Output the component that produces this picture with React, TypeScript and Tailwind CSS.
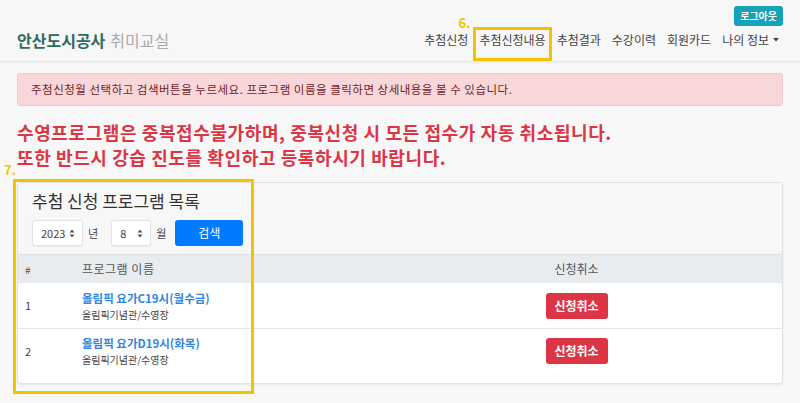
import React from "react";

const NAV = ["추첨신청", "추첨신청내용", "추첨결과", "수강이력", "회원카드"];

const ROWS = [
  { no: 1, title: "올림픽 요가C19시(월수금)", place: "올림픽기념관/수영장" },
  { no: 2, title: "올림픽 요가D19시(화목)", place: "올림픽기념관/수영장" },
];

function Updown() {
  return (
    <svg width="6" height="9" viewBox="0 0 6 9" className="text-[#555]">
      <path d="M3 0.5 L5.5 3.5 H0.5 Z M3 8.5 L5.5 5.5 H0.5 Z" fill="currentColor" />
    </svg>
  );
}

function FakeSelect({ value, width }: { value: string; width: string }) {
  return (
    <div
      className={`${width} h-[26px] bg-white rounded-[3px] border border-[#e3e3e3] shadow-[0_1px_1px_rgba(0,0,0,0.05)] flex items-center justify-between pl-[8px] pr-[7px] text-[11px] text-[#444]`}
    >
      <span>{value}</span>
      <Updown />
    </div>
  );
}

export default function App() {
  return (
    <div className="min-h-screen bg-[#f8f8f8] font-['Noto_Sans_CJK_KR','Noto_Sans',sans-serif] text-[#333]">
      {/* Navbar */}
      <header className="h-[62px] bg-[#f7f7f7] border-b border-[#e6e6e6] shadow-[0_1px_2px_rgba(0,0,0,0.04)] px-[17px] flex flex-col">
        <div className="flex justify-end pt-[6px]">
          <button className="h-[20px] px-[6px] bg-[#17a2b8] rounded-[3px] text-white text-[10px] font-bold leading-none">
            로그아웃
          </button>
        </div>
        <div className="h-[28px] flex items-center justify-between">
          <div className="flex items-baseline gap-[5px] text-[16px] leading-none">
            <span className="font-bold text-[#2f6a5f]">안산도시공사</span>
            <span className="text-[#aaa]">취미교실</span>
          </div>
          <nav className="flex items-center text-[12px] text-[#444] gap-[11px] pr-[4px]">
            {NAV.map((n) => (
              <span key={n} className="relative leading-[16px]">
                {n}
                {n === "추첨신청내용" && (
                  <>
                    <span className="absolute left-[-6px] right-[-6px] top-[-5px] bottom-[-13px] border-[3px] border-[#f6c200]" />
                    <span className="absolute left-[-21px] top-[-16px] text-[13px] font-bold text-[#f6c200] leading-none">
                      6.
                    </span>
                  </>
                )}
              </span>
            ))}
            <span className="flex items-center gap-[4px] leading-[16px]">
              나의 정보
              <svg width="6" height="4" viewBox="0 0 6 4">
                <path d="M0 0 H6 L3 3.5 Z" fill="#444" />
              </svg>
            </span>
          </nav>
        </div>
      </header>

      <main className="px-[17px]">
        <div className="mt-[11px] h-[33px] bg-[#f8d7da] border border-[#f5c6cb] rounded-[3px] flex items-center px-[13px] text-[11.5px] tracking-[0.5px] text-[#721c24]">
          주첨신청월 선택하고 검색버튼을 누르세요. 프로그램 이름을 클릭하면 상세내용을 볼 수 있습니다.
        </div>

        <div className="mt-[14px] text-[18px] leading-[25px] font-bold tracking-[0.6px] text-[#dc3545]">
          <p>수영프로그램은 중복접수불가하며, 중복신청 시 모든 접수가 자동 취소됩니다.</p>
          <p>또한 반드시 강습 진도를 확인하고 등록하시기 바랍니다.</p>
        </div>

        {/* Card */}
        <div className="relative mt-[12px] border border-[#e2e2e2] rounded-[3px] bg-white shadow-[0_1px_3px_rgba(0,0,0,0.08)]">
          <span className="absolute left-[-5px] top-[-4px] w-[241px] h-[215px] border-[3px] border-[#f6c200] pointer-events-none z-10" />
          <span className="absolute left-[-14px] top-[-20px] text-[13px] font-bold text-[#f6c200] leading-none">
            7.
          </span>

          <div className="bg-[#f7f7f7] px-[14px] pt-[7px] pb-[8px]">
            <h2 className="text-[17px] leading-[22px] text-[#333]">추첨 신청 프로그램 목록</h2>
            <div className="mt-[8px] flex items-center text-[11px] text-[#444]">
              <FakeSelect value="2023" width="w-[51px]" />
              <span className="ml-[5px] mr-[13px]">년</span>
              <FakeSelect value="8" width="w-[40px]" />
              <span className="ml-[5px] mr-[9px]">월</span>
              <button className="w-[68px] h-[26px] bg-[#007bff] rounded-[3px] text-white text-[12px]">
                검색
              </button>
            </div>
          </div>

          <div className="grid grid-cols-[57px_296px_1fr] h-[29px] items-center bg-[#e9ecef] border-t border-[#dee2e6] text-[12px] text-[#555]">
            <span className="pl-[7px] text-[10px]">#</span>
            <span className="pl-[7px] tracking-[0.5px]">프로그램 이름</span>
            <span className="text-center">신청취소</span>
          </div>

          <div className="pb-[10px]">
            {ROWS.map((r, i) => (
              <div
                key={r.no}
                className={`grid grid-cols-[57px_296px_1fr] h-[45px] items-center ${i > 0 ? "border-t border-[#e6e6e6]" : ""}`}
              >
                <span className="pl-[7px] text-[11px] text-[#444]">{r.no}</span>
                <div className="pl-[7px] flex flex-col justify-center">
                  <span className="text-[11.5px] font-bold text-[#2f86e0] leading-[16px]">{r.title}</span>
                  <span className="text-[10px] text-[#444] leading-[14px] mt-[2px]">{r.place}</span>
                </div>
                <div className="flex justify-center">
                  <button className="w-[62px] h-[26px] bg-[#dc3545] rounded-[3px] text-white text-[12px] font-bold">
                    신청취소
                  </button>
                </div>
              </div>
            ))}
          </div>
        </div>
      </main>
    </div>
  );
}
